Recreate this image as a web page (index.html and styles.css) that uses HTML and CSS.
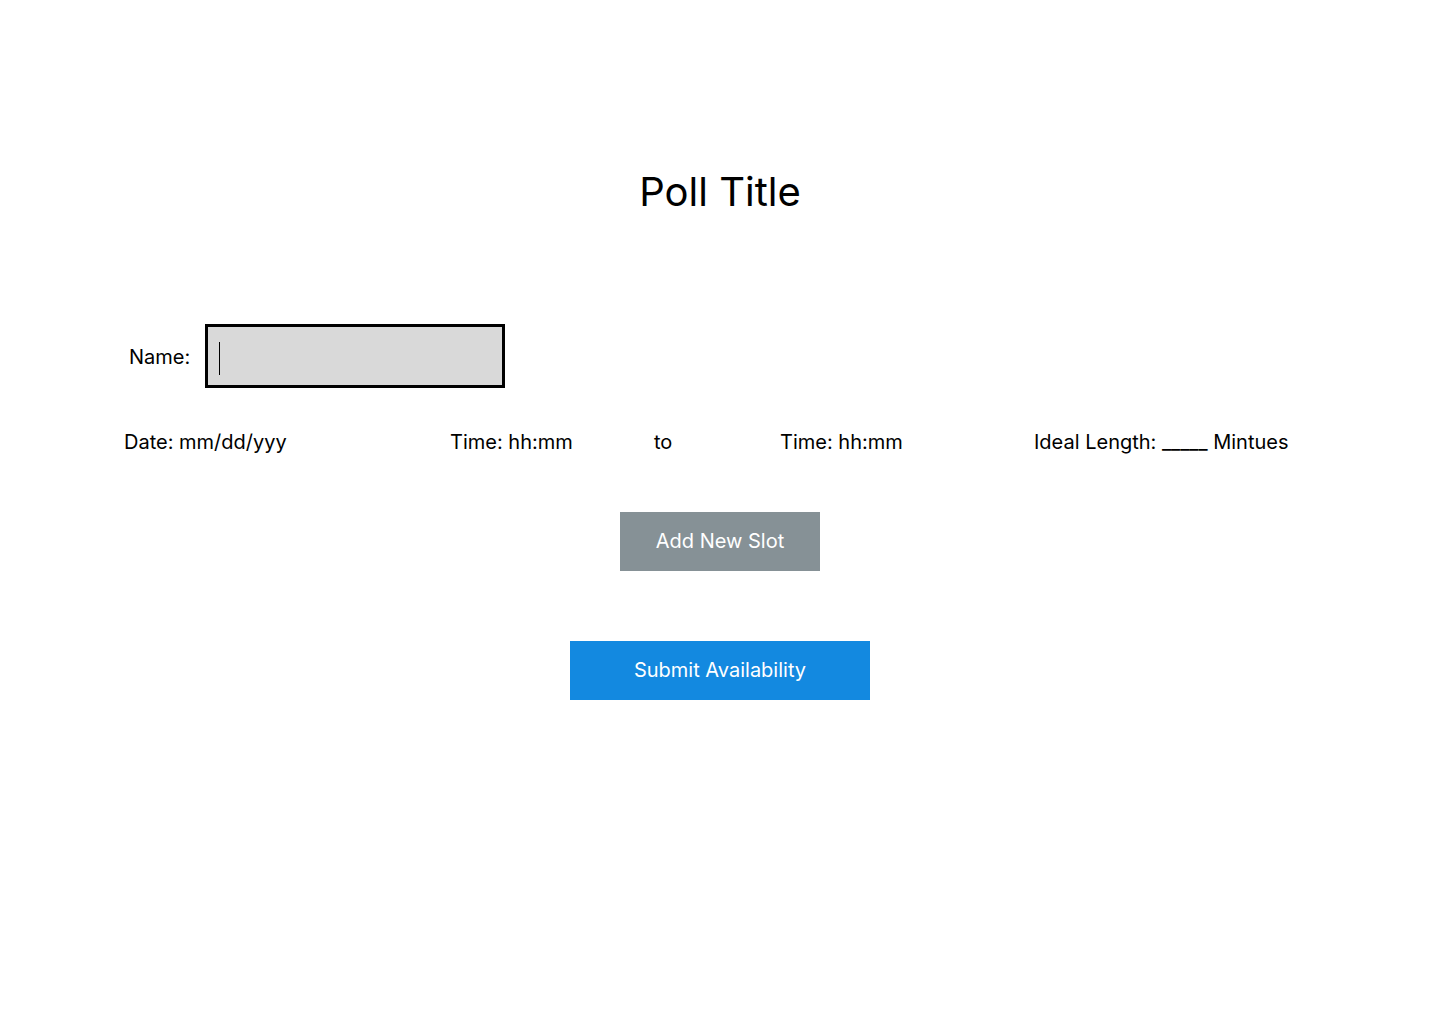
FILE: index.html
```html
<!DOCTYPE html>
<html lang="en">
<head>
<meta charset="utf-8">
<meta name="viewport" content="width=device-width, initial-scale=1">
<title>Poll Title</title>
<link rel="stylesheet" href="styles.css">
</head>
<body>
<main class="poll">
  <h1 class="poll-title">Poll Title</h1>
  <form class="poll-form">
    <div class="name-row">
      <label class="name-label" for="name">Name:</label>
      <div class="name-field">
        <input class="name-input" id="name" type="text">
        <span class="caret" aria-hidden="true"></span>
      </div>
    </div>
    <div class="slot">
      <span>Date: mm/dd/yyy</span>
      <span>Time: hh:mm</span>
      <span>to</span>
      <span>Time: hh:mm</span>
      <span>Ideal Length: _____ Mintues</span>
    </div>
    <div class="actions">
      <button class="button button-add" type="button">Add New Slot</button>
      <button class="button button-submit" type="submit">Submit Availability</button>
    </div>
  </form>
</main>
</body>
</html>
```

FILE: styles.css
```css
* {
  box-sizing: border-box;
}

body {
  margin: 0;
  background: #fff;
  color: #000;
  font-family: Inter, sans-serif;
  font-size: 20px;
  line-height: 24px;
}

.poll {
  padding: 168px 124px 64px;
}

.poll-title {
  margin: 0;
  font-size: 40px;
  font-weight: 400;
  line-height: 48px;
  text-align: center;
}

.poll-form {
  margin-top: 108px;
}

.name-row {
  display: flex;
  align-items: center;
  gap: 15px;
  padding-left: 5px;
}

.name-label {
  padding-top: 2px;
}

.name-field {
  position: relative;
  width: 300px;
}

.name-input {
  display: block;
  width: 100%;
  height: 64px;
  padding: 0 12px;
  border: 3px solid #000;
  border-radius: 0;
  background: #d9d9d9;
  font: inherit;
  outline: none;
}

.caret {
  position: absolute;
  top: 18px;
  left: 14px;
  width: 1px;
  height: 33px;
  background: #000;
}

.name-input:focus + .caret {
  display: none;
}

.slot {
  display: grid;
  grid-template-columns: 326fr 204fr 126fr 254fr 282fr;
  margin-top: 42px;
  white-space: nowrap;
}

.actions {
  display: flex;
  flex-direction: column;
  align-items: center;
  gap: 70px;
  margin-top: 58px;
}

.button {
  height: 59px;
  padding: 0 0 2px;
  border: 0;
  color: #fff;
  font: inherit;
  cursor: pointer;
}

.button-add {
  width: 200px;
  background: #869196;
}

.button-submit {
  width: 300px;
  background: #1389e0;
}
```
